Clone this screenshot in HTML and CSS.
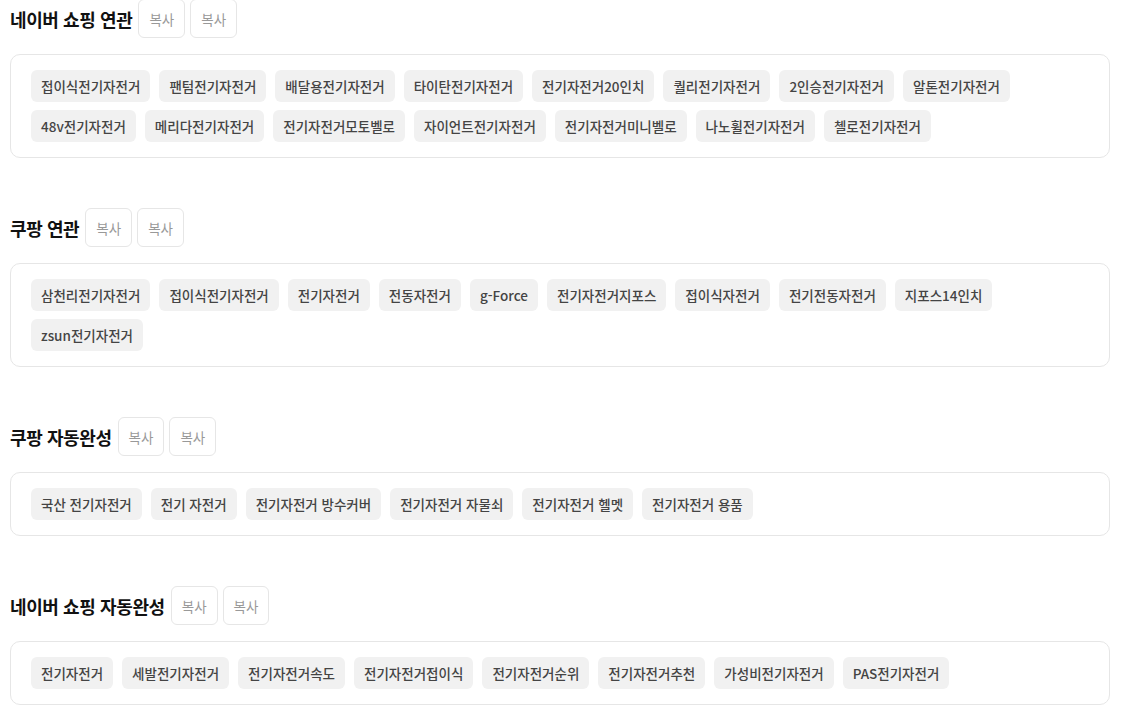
FILE: index.html
```html
<!DOCTYPE html>
<html lang="ko">
<head>
    <meta charset="UTF-8">
    <meta name="viewport" content="width=device-width, initial-scale=1.0">
    <title>연관 키워드</title>
    <link rel="stylesheet" href="styles.css">
</head>
<body>
    <div class="container">
        <div class="section">
            <div class="section-header">
                <h2 class="section-title">네이버 쇼핑 연관</h2>
                <button class="copy-btn">복사</button>
                <button class="copy-btn">복사</button>
            </div>
            <div class="keyword-box">
                <span class="keyword">접이식전기자전거</span>
                <span class="keyword">팬텀전기자전거</span>
                <span class="keyword">배달용전기자전거</span>
                <span class="keyword">타이탄전기자전거</span>
                <span class="keyword">전기자전거20인치</span>
                <span class="keyword">퀄리전기자전거</span>
                <span class="keyword">2인승전기자전거</span>
                <span class="keyword">알톤전기자전거</span>
                <span class="keyword">48v전기자전거</span>
                <span class="keyword">메리다전기자전거</span>
                <span class="keyword">전기자전거모토벨로</span>
                <span class="keyword">자이언트전기자전거</span>
                <span class="keyword">전기자전거미니벨로</span>
                <span class="keyword">나노휠전기자전거</span>
                <span class="keyword">첼로전기자전거</span>
            </div>
        </div>

        <div class="section">
            <div class="section-header">
                <h2 class="section-title">쿠팡 연관</h2>
                <button class="copy-btn">복사</button>
                <button class="copy-btn">복사</button>
            </div>
            <div class="keyword-box">
                <span class="keyword">삼천리전기자전거</span>
                <span class="keyword">접이식전기자전거</span>
                <span class="keyword">전기자전거</span>
                <span class="keyword">전동자전거</span>
                <span class="keyword">g-Force</span>
                <span class="keyword">전기자전거지포스</span>
                <span class="keyword">접이식자전거</span>
                <span class="keyword">전기전동자전거</span>
                <span class="keyword">지포스14인치</span>
                <span class="keyword">zsun전기자전거</span>
            </div>
        </div>

        <div class="section">
            <div class="section-header">
                <h2 class="section-title">쿠팡 자동완성</h2>
                <button class="copy-btn">복사</button>
                <button class="copy-btn">복사</button>
            </div>
            <div class="keyword-box">
                <span class="keyword">국산 전기자전거</span>
                <span class="keyword">전기 자전거</span>
                <span class="keyword">전기자전거 방수커버</span>
                <span class="keyword">전기자전거 자물쇠</span>
                <span class="keyword">전기자전거 헬멧</span>
                <span class="keyword">전기자전거 용품</span>
            </div>
        </div>

        <div class="section">
            <div class="section-header">
                <h2 class="section-title">네이버 쇼핑 자동완성</h2>
                <button class="copy-btn">복사</button>
                <button class="copy-btn">복사</button>
            </div>
            <div class="keyword-box">
                <span class="keyword">전기자전거</span>
                <span class="keyword">세발전기자전거</span>
                <span class="keyword">전기자전거속도</span>
                <span class="keyword">전기자전거접이식</span>
                <span class="keyword">전기자전거순위</span>
                <span class="keyword">전기자전거추천</span>
                <span class="keyword">가성비전기자전거</span>
                <span class="keyword">PAS전기자전거</span>
            </div>
        </div>
    </div>
</body>
</html>
```

FILE: styles.css
```css
body {
    margin: 0;
    padding: 0 10px;
    font-family: "Noto Sans CJK KR", "Noto Sans", sans-serif;
    color: #222;
    background: #ffffff;
}

.container {
    width: 1100px;
    margin-top: -1px;
}

.section {
    margin-bottom: 50px;
}

.section-header {
    display: flex;
    align-items: center;
    gap: 5px;
    height: 39px;
    margin-bottom: 16px;
}

.section-title {
    margin: 0 1px 0 0;
    font-size: 18px;
    font-weight: 700;
    color: #111;
    letter-spacing: -0.4px;
}

.copy-btn {
    height: 39px;
    padding: 0 10px;
    border: 1px solid #e6e6e6;
    border-radius: 6px;
    background: #ffffff;
    color: #999999;
    font-family: inherit;
    font-size: 13.5px;
    cursor: pointer;
}

.keyword-box {
    display: flex;
    flex-wrap: wrap;
    gap: 8px 9px;
    padding: 15px 20px;
    border: 1px solid #e6e6e6;
    border-radius: 10px;
}

.keyword {
    display: flex;
    align-items: center;
    height: 32px;
    padding: 0 10px;
    border-radius: 6px;
    background: #f1f1f1;
    color: #444444;
    font-size: 13.5px;
    font-weight: 500;
    white-space: nowrap;
}
```
